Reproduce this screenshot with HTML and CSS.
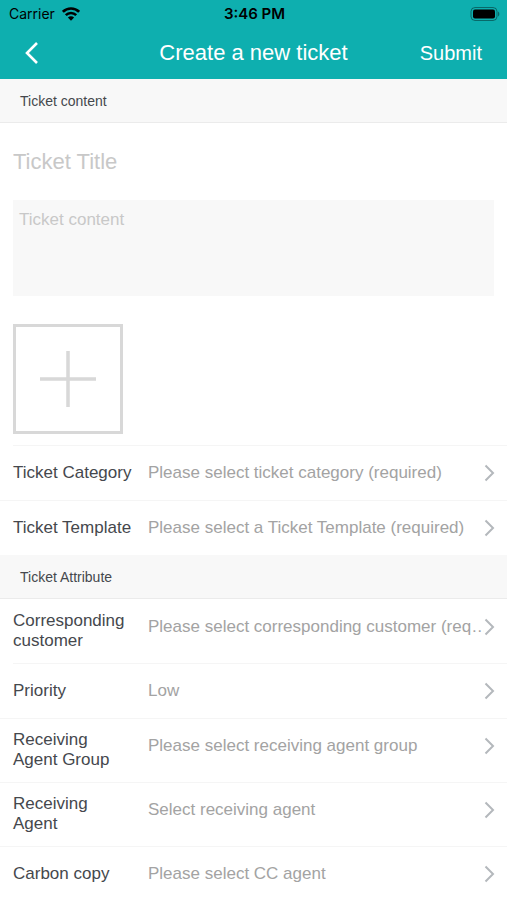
FILE: index.html
```html
<!DOCTYPE html>

<html lang="en">

<head>
  <meta charset="utf-8">
  <meta name="viewport" content="width=device-width, initial-scale=1">
  <link rel="stylesheet" href="styles.css">
  <title>Create a new ticket</title>
</head>

<body>
  <!-- Status bar and nav bar -->
  <header class="top">
    <div class="status">
      <div class="carrier">
        <span>Carrier</span>
        <svg width="18" height="14" viewBox="0 0 18 14" aria-hidden="true">
          <g fill="none" stroke="#000" stroke-width="2.6">
            <path d="M0.9 4.8a11.5 11.5 0 0 1 16.2 0" />
            <path d="M3.8 8.2a7.4 7.4 0 0 1 10.4 0" />
          </g>
          <path d="M9 13.8L5.9 10.6a4.4 4.4 0 0 1 6.2 0z" />
        </svg>
      </div>
      <div class="clock">3:46 PM</div>
      <div class="battery">
        <svg width="30" height="14" viewBox="0 0 30 14" aria-hidden="true">
          <rect x="1" y="0.5" width="26" height="13" rx="4" fill="none" stroke="#000" stroke-opacity="0.4" />
          <rect x="3" y="2.5" width="22" height="9" rx="2" />
          <path d="M28 4.5c1.8 0.8 1.8 4.2 0 5z" fill-opacity="0.4" />
        </svg>
      </div>
    </div>
    <nav class="navbar">
      <button type="button" class="back" aria-label="Back">
        <svg width="14" height="24" viewBox="0 0 14 24" aria-hidden="true">
          <path d="M12 2L2 12l10 10" fill="none" stroke="#fff" stroke-width="2.6" />
        </svg>
      </button>
      <h1>Create a new ticket</h1>
      <button type="submit" form="ticket" class="submit">Submit</button>
    </nav>
  </header>

  <form id="ticket">
    <h2>Ticket content</h2>
    <div class="content">
      <input type="text" class="title" aria-label="Ticket Title" placeholder="Ticket Title">
      <textarea class="text" aria-label="Ticket content" placeholder="Ticket content"></textarea>
      <button type="button" class="add" aria-label="Add attachment">
        <svg width="56" height="56" viewBox="0 0 56 56" aria-hidden="true">
          <path d="M28 0v56M0 28h56" stroke="#d8d8d8" stroke-width="3.5" />
        </svg>
      </button>
    </div>

    <div class="row inset">
      <label for="category">Ticket Category</label>
      <select id="category">
        <option>Please select ticket category (required)</option>
      </select>
      <svg class="arrow" width="11" height="18" viewBox="0 0 11 18" aria-hidden="true"><path d="M1.5 1.5L9 9l-7.5 7.5" /></svg>
    </div>
    <div class="row">
      <label for="template">Ticket Template</label>
      <select id="template">
        <option>Please select a Ticket Template (required)</option>
      </select>
      <svg class="arrow" width="11" height="18" viewBox="0 0 11 18" aria-hidden="true"><path d="M1.5 1.5L9 9l-7.5 7.5" /></svg>
    </div>

    <h2>Ticket Attribute</h2>
    <div class="row first">
      <label for="customer">Corresponding customer</label>
      <select id="customer">
        <option>Please select corresponding customer (required)</option>
      </select>
      <svg class="arrow" width="11" height="18" viewBox="0 0 11 18" aria-hidden="true"><path d="M1.5 1.5L9 9l-7.5 7.5" /></svg>
    </div>
    <div class="row inset">
      <label for="priority">Priority</label>
      <select id="priority">
        <option>Low</option>
      </select>
      <svg class="arrow" width="11" height="18" viewBox="0 0 11 18" aria-hidden="true"><path d="M1.5 1.5L9 9l-7.5 7.5" /></svg>
    </div>
    <div class="row">
      <label for="group">Receiving Agent Group</label>
      <select id="group">
        <option>Please select receiving agent group</option>
      </select>
      <svg class="arrow" width="11" height="18" viewBox="0 0 11 18" aria-hidden="true"><path d="M1.5 1.5L9 9l-7.5 7.5" /></svg>
    </div>
    <div class="row">
      <label for="agent">Receiving Agent</label>
      <select id="agent">
        <option>Select receiving agent</option>
      </select>
      <svg class="arrow" width="11" height="18" viewBox="0 0 11 18" aria-hidden="true"><path d="M1.5 1.5L9 9l-7.5 7.5" /></svg>
    </div>
    <div class="row">
      <label for="cc">Carbon copy</label>
      <select id="cc">
        <option>Please select CC agent</option>
      </select>
      <svg class="arrow" width="11" height="18" viewBox="0 0 11 18" aria-hidden="true"><path d="M1.5 1.5L9 9l-7.5 7.5" /></svg>
    </div>
  </form>
</body>

</html>
```

FILE: styles.css
```css
* {
  box-sizing: border-box;
}

body {
  margin: 0;
  background-color: #fff;
  color: #45484d;
  font-family: "Liberation Sans", Arial, sans-serif;
  font-size: 17px;
}

button,
input,
textarea,
select {
  margin: 0;
  padding: 0;
  border: none;
  border-radius: 0;
  background: none;
  color: inherit;
  font: inherit;
}

svg {
  display: block;
}

.top {
  background-color: #0eafaf;
  color: #fff;
}

.status {
  display: grid;
  grid-template-columns: 1fr auto 1fr;
  align-items: center;
  height: 27px;
  padding: 0 7px 0 9px;
  color: #000;
  font-family: Inter, sans-serif;
  font-size: 14px;
}

.carrier {
  display: flex;
  align-items: center;
  gap: 7px;
}

.clock {
  font-size: 15px;
  font-weight: 600;
}

.battery {
  justify-self: end;
}

.navbar {
  display: grid;
  grid-template-columns: 1fr auto 1fr;
  align-items: center;
  height: 52px;
  padding: 0 25px;
}

.back {
  justify-self: start;
}

h1 {
  margin: 0;
  font-size: 22px;
  font-weight: normal;
}

.submit {
  justify-self: end;
  font-size: 20px;
}

h2 {
  height: 44px;
  margin: 0;
  padding: 0 20px;
  border-bottom: 1px solid #ebebeb;
  background-color: #f8f8f8;
  font-size: 14px;
  font-weight: normal;
  line-height: 44px;
}

.content {
  display: flex;
  flex-direction: column;
  align-items: flex-start;
  padding: 0 13px 11px;
}

.title {
  width: 100%;
  height: 77px;
  font-size: 22px;
}

.text {
  width: 100%;
  height: 96px;
  margin-bottom: 28px;
  padding: 10px 6px;
  background-color: #f8f8f8;
  line-height: 20px;
  resize: none;
}

.title::placeholder,
.text::placeholder {
  color: #c8c8c8;
  opacity: 1;
}

.add {
  display: grid;
  place-items: center;
  width: 110px;
  height: 110px;
  border: 3px solid #d8d8d8;
}

.row {
  display: flex;
  align-items: flex-start;
  padding: 0 12px 0 13px;
  background: linear-gradient(#f5f5f5, #f5f5f5) no-repeat 0 0 / 100% 1px;
}

.row.inset {
  background-position: 13px 0;
}

.row.first {
  background: none;
}

.row label {
  align-self: center;
  width: 135px;
  padding: 12px 15px 12px 0;
  line-height: 20px;
}

.row label,
.row .arrow {
  flex: none;
}

/* long values run on under the arrow */
.row select {
  flex: 1;
  min-width: 0;
  height: 55px;
  margin-right: -8px;
  appearance: none;
  color: #a3a3a3;
  text-overflow: ellipsis;
}

.arrow {
  margin-top: 19px;
  background-color: #fff;
  fill: none;
  stroke: #b4b8bc;
  stroke-width: 2;
  pointer-events: none;
}
```
